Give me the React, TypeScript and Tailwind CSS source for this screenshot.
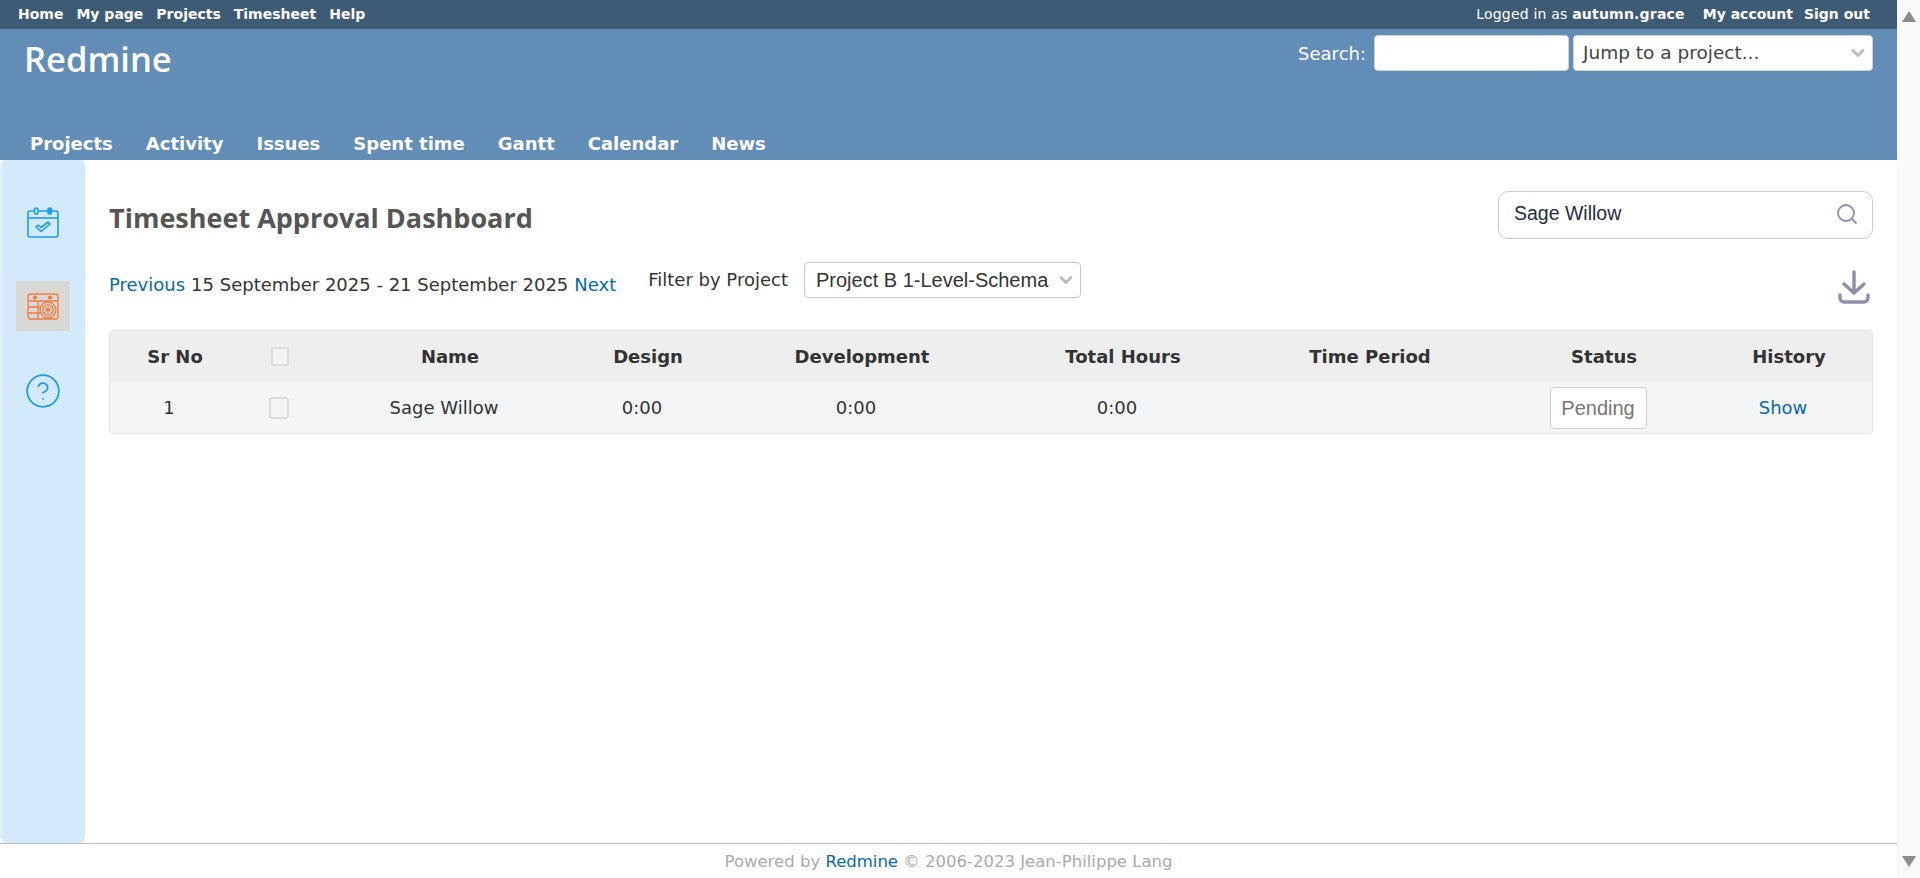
import React from 'react';
import { Search, CircleHelp, ChevronDown } from 'lucide-react';

const topLinks = ['Home', 'My page', 'Projects', 'Timesheet', 'Help'];
const mainLinks = ['Projects', 'Activity', 'Issues', 'Spent time', 'Gantt', 'Calendar', 'News'];

const verdana = "font-['DejaVu_Sans',sans-serif]";
const COLS = 'grid grid-cols-[130px_80px_260px_136px_292px_230px_264px_204px_166px]';

const CalendarCheckIcon = () => (
  <svg width="32" height="31" viewBox="0 0 32 31" fill="none" stroke="#1e9bf5" strokeWidth="1.6">
    <rect x="1" y="4" width="30" height="26" rx="2.5" />
    <path d="M1 11h30" />
    <rect x="7.5" y="1" width="3.5" height="6" rx="1.75" fill="#d2eafb" />
    <rect x="21" y="1" width="3.5" height="6" rx="1.75" fill="#1e9bf5" />
    <path d="M9 20l2-2 3 2.5 7-5.5 2 2-9 7.5z" strokeLinejoin="round" />
  </svg>
);

const TimesheetIcon = () => (
  <svg width="32" height="27" viewBox="0 0 32 27" fill="none" stroke="#f4793f" strokeWidth="1.3">
    <rect x="1" y="1" width="30" height="25" rx="2.5" />
    <path d="M1 8h30M1 14h13M1 20h13M11 8v18" />
    <circle cx="8" cy="4.5" r="1.4" fill="#f4793f" />
    <circle cx="23" cy="4.5" r="1.4" fill="#f4793f" />
    <circle cx="21" cy="17" r="8" fill="#d8d9d5" />
    <circle cx="21" cy="17" r="5.4" />
    <path d="M21 13v8M17 17h8M18.2 14.2l5.6 5.6M23.8 14.2l-5.6 5.6" strokeWidth="1" />
  </svg>
);

const DownloadIcon = () => (
  <svg width="32" height="34" viewBox="0 0 32 34" fill="none" stroke="#8b90a5" strokeWidth="3.4" strokeLinecap="round" strokeLinejoin="round">
    <path d="M16 2v21M6 14l10 9 10-9" />
    <path d="M2 25v3a4 4 0 0 0 4 4h20a4 4 0 0 0 4-4v-3" />
  </svg>
);

const Checkbox = ({ size }: { size: string }) => (
  <span className={`block ${size} rounded-[3px] border-2 border-[#dcdcdc] bg-[#f3f4f6]`} />
);

export default function App() {
  return (
    <div className={`flex h-[878px] w-full overflow-hidden bg-white ${verdana}`}>
      <div className="flex min-w-0 flex-1 flex-col">
        {/* top menu */}
        <div className="flex h-[29px] shrink-0 items-center justify-between bg-[#3e5b76] pl-[18px] pr-[27px] text-[14px] text-white">
          <div className="flex gap-[13px] font-bold">
            {topLinks.map(l => <span key={l}>{l}</span>)}
          </div>
          <div className="flex">
            <span className="tracking-[0.2px]">Logged in as <b>autumn.grace</b></span>
            <b className="ml-[18px]">My account</b>
            <b className="ml-[11px]">Sign out</b>
          </div>
        </div>

        {/* header */}
        <div className="relative flex h-[131px] shrink-0 flex-col justify-between bg-[#628db6] pl-[24px] pr-[24px] text-white">
          <div className="flex items-start justify-between">
            <div className="mt-[7px] font-['Open_Sans',sans-serif] text-[34.5px] font-semibold leading-[46px]">Redmine</div>
            <div className="mt-[6px] flex items-center text-[18px]">
              <span className="mr-2">Search:</span>
              <span className="h-[36px] w-[195px] rounded-[4px] border border-[#d0d0d0] bg-white" />
              <span className="ml-[4px] flex h-[36px] w-[300px] items-center justify-between rounded-[4px] border border-[#d0d0d0] bg-white pl-[9px] pr-[4px] text-[18.5px] text-[#444]">
                Jump to a project...
                <ChevronDown size={20} strokeWidth={3.5} className="text-[#bbb]" />
              </span>
            </div>
          </div>
          <div className="flex gap-[33px] pb-[4px] pl-[6px] text-[18px] font-bold leading-[24px]">
            {mainLinks.map(l => <span key={l}>{l}</span>)}
          </div>
        </div>

        {/* body */}
        <div className="flex min-h-0 flex-1">
          <div className="flex w-[85px] shrink-0 flex-col items-center rounded-[6px] border-l-2 border-[#e3eef6] bg-[#d2eafb] pr-[1px]">
            <div className="mt-[47px]"><CalendarCheckIcon /></div>
            <div className="mt-[43px] flex h-[50px] w-[54px] items-center justify-center bg-[#d8d9d5]"><TimesheetIcon /></div>
            <CircleHelp size={38} strokeWidth={1.1} className="mt-[41px] text-[#1e9bf5]" />
          </div>

          <div className="min-w-0 flex-1 px-[24px]">
            <div className="flex items-start justify-between pt-[31px]">
              <h2 className="mt-[8px] font-['Open_Sans',sans-serif] text-[27px] font-bold leading-[38px] text-[#555]">Timesheet Approval Dashboard</h2>
              <div className="flex h-[48px] w-[375px] items-center justify-between rounded-[10px] border border-[#cccccc] pb-[2px] pl-[15px] pr-[13px] font-['Liberation_Sans',sans-serif] text-[19.5px] text-[#1f2a44]">
                Sage Willow
                <Search size={24} strokeWidth={1.8} className="text-[#8b90a5]" />
              </div>
            </div>

            <div className="mt-[23px] flex h-[68px] items-start text-[18px] text-[#333]">
              <div className="mt-[9px] flex gap-[6px]">
                <span className="text-[#0a6aa1]">Previous</span>
                <span>15 September 2025 - 21 September 2025</span>
                <span className="text-[#0a6aa1]">Next</span>
              </div>
              <span className="ml-[32px] mt-[4px]">Filter by Project</span>
              <div className="ml-[16px] flex h-[36px] w-[277px] items-center justify-between rounded-[4px] border border-[#c8c8c8] pl-[11px] pr-[4px] font-['Liberation_Sans',sans-serif] text-[20px] text-[#333]">
                Project B 1-Level-Schema
                <ChevronDown size={20} strokeWidth={3.5} className="text-[#bbb]" />
              </div>
              <div className="ml-auto mt-[8px] mr-[3px]"><DownloadIcon /></div>
            </div>

            {/* table */}
            <div className="overflow-hidden rounded-[4px] border border-[#e4e4e4] text-[18px] text-[#333]">
              <div className={`${COLS} h-[51px] items-center bg-[#eeeeee] text-center font-bold`}>
                <span>Sr No</span>
                <span className="flex justify-center"><Checkbox size="h-[19px] w-[18px]" /></span>
                <span>Name</span>
                <span>Design</span>
                <span>Development</span>
                <span>Total Hours</span>
                <span>Time Period</span>
                <span>Status</span>
                <span>History</span>
              </div>
              <div className={`${COLS} h-[51px] items-center bg-[#f4f5f7] text-center`}>
                <span className="pr-3">1</span>
                <span className="flex justify-center pr-0.5"><Checkbox size="h-[22px] w-[20px]" /></span>
                <span className="pr-3">Sage Willow</span>
                <span className="pr-3">0:00</span>
                <span className="pr-3">0:00</span>
                <span className="pr-3">0:00</span>
                <span />
                <span className="flex justify-center pr-3">
                  <span className="flex h-[42px] w-[97px] items-center justify-center rounded-[4px] border border-[#cfcfcf] bg-white font-['Liberation_Sans',sans-serif] text-[20px] text-[#777]">Pending</span>
                </span>
                <span className="pr-3 text-[#0a6aa1]">Show</span>
              </div>
            </div>
          </div>
        </div>

        {/* footer */}
        <div className="h-[35px] shrink-0 border-t border-[#bbbbbb] pt-[8px] text-center text-[16.5px] leading-[20px] text-[#aaaaaa]">
          Powered by <span className="text-[#0a6aa1]">Redmine</span> © 2006-2023 Jean-Philippe Lang
        </div>
      </div>

      {/* scrollbar */}
      <div className="flex w-[23px] shrink-0 flex-col items-center justify-between bg-[#fafafa] py-[11px]">
        <svg width="14" height="11" viewBox="0 0 14 11"><path d="M7 0l7 11H0z" fill="#8c8c8c" /></svg>
        <svg width="14" height="11" viewBox="0 0 14 11"><path d="M0 0h14L7 11z" fill="#8c8c8c" /></svg>
      </div>
    </div>
  );
}
